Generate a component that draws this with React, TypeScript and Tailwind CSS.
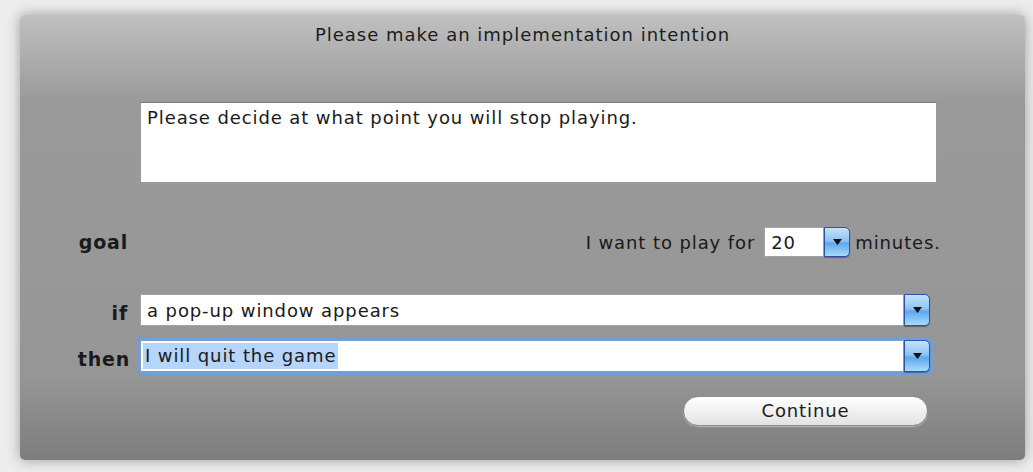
import React from "react";

const font = { fontFamily: '"DejaVu Sans", "Liberation Sans", sans-serif' };

function Arrow() {
  return (
    <svg width="9" height="6" viewBox="0 0 9 6" className="block">
      <path d="M0 0 H9 L4.5 6 Z" fill="#111" />
    </svg>
  );
}

function ComboButton() {
  return (
    <div className="flex h-full w-[26px] shrink-0 items-center justify-center rounded-r-[5px] border border-[#2f4fa8] bg-[linear-gradient(to_bottom,#c4e2fb_0%,#8ec5f4_45%,#5ea8ec_55%,#a9dafc_100%)] shadow-[0_1px_1px_rgba(0,0,0,0.35)]">
      <Arrow />
    </div>
  );
}

export default function App() {
  return (
    <div
      className="h-[472px] w-[1033px] overflow-hidden bg-[#ededed] pl-[20px] pt-[15px] text-[#1a1a1a]"
      style={font}
    >
      <div className="flex h-[445px] w-[1005px] flex-col rounded-[5px] bg-[linear-gradient(to_bottom,#c0c0c0_0px,#9a9a9a_85px,#969696_360px,#7d7d7d_100%)] shadow-[0_0_14px_rgba(0,0,0,0.35)]">
        <div className="pt-[10px] text-center text-[18px] leading-[20px] tracking-[1px] text-[#1c1c1c]">
          Please make an implementation intention
        </div>

        <div className="ml-[120px] mt-[57px] h-[81px] w-[797px] border border-[#9a9a9a] border-t-[#7a7a7a] bg-white px-[6px] pt-[4px] text-[18px] leading-[22px] tracking-[0.9px]">
          Please decide at what point you will stop playing.
        </div>

        <div className="mt-[44px] flex h-[30px] items-center">
          <div className="w-[108px] text-right text-[19px] font-bold leading-[20px] tracking-[0.8px]">goal</div>
          <div className="ml-auto mr-[84px] flex h-[30px] items-center text-[18px] tracking-[0.9px]">
            <span className="mr-[9px]">I want to play for</span>
            <div className="flex h-[30px] items-stretch">
              <div className="flex w-[60px] items-center border border-[#a3a3a3] bg-white pl-[6px] text-[18px]">20</div>
              <ComboButton />
            </div>
            <span className="ml-[5px]">minutes.</span>
          </div>
        </div>

        <div className="mt-[37px] flex items-center">
          <div className="mt-[6px] w-[108px] text-right text-[19px] font-bold leading-[20px] tracking-[0.8px]">if</div>
          <div className="ml-[12px] flex h-[32px] w-[790px]">
            <div className="flex flex-1 items-center border border-[#a3a3a3] bg-white pl-[6px] text-[18px] tracking-[0.9px]">
              a pop-up window appears
            </div>
            <ComboButton />
          </div>
        </div>

        <div className="mt-[14px] flex items-center">
          <div className="mt-[6px] w-[110px] text-right text-[19px] font-bold leading-[20px] tracking-[0.8px]">then</div>
          <div className="ml-[10px] flex h-[32px] w-[790px] rounded-[3px] shadow-[0_0_0_3px_#6f9fd8]">
            <div className="flex flex-1 items-center border border-[#7e9fcf] bg-white pl-[2px] text-[18px] tracking-[0.9px]">
              <span className="bg-[#b5d5fd] pl-[2px] pr-[2px] leading-[26px]">I will quit the game</span>
            </div>
            <ComboButton />
          </div>
        </div>

        <div className="mt-[24px] flex">
          <button className="ml-[663px] h-[30px] w-[245px] rounded-full border border-[#8c8c8c] bg-[linear-gradient(to_bottom,#ffffff_0%,#f1f1f1_50%,#e2e2e2_100%)] text-[18px] leading-[20px] tracking-[0.9px] text-[#1c1c1c] shadow-[0_1px_1px_rgba(255,255,255,0.4)]">
            Continue
          </button>
        </div>
      </div>
    </div>
  );
}
